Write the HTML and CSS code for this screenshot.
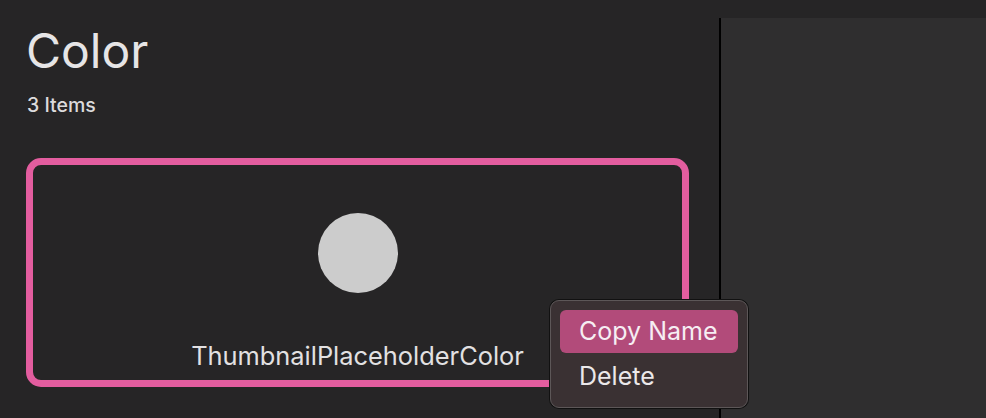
FILE: index.html
```html
<!DOCTYPE html>
<html>
<head>
<meta charset="utf-8">
<link rel="stylesheet" href="styles.css">
</head>
<body>
<div class="app">
  <main class="left">
    <h1 class="title">Color</h1>
    <div class="count">3 Items</div>
    <div class="card">
      <div class="swatch"></div>
      <div class="name">ThumbnailPlaceholderColor</div>
    </div>
  </main>
  <aside class="right"></aside>
</div>
<div class="menu">
  <div class="item active">Copy Name</div>
  <div class="item">Delete</div>
</div>
</body>
</html>
```
FILE: styles.css
```css
html, body {
  margin: 0;
  padding: 0;
  background: #262526;
  width: 986px;
  height: 418px;
  overflow: hidden;
  font-family: "Inter", "Liberation Sans", sans-serif;
}
.app {
  display: flex;
  height: 418px;
}
.left {
  width: 719px;
  flex: none;
  padding-left: 26px;
  box-sizing: border-box;
}
.title {
  margin: 0;
  padding-top: 23px;
  font-size: 48px;
  font-weight: 400;
  line-height: 56px;
  color: #e6e5e6;
  padding-left: 0;
}
.count {
  margin-top: 15px;
  font-size: 19.5px;
  font-weight: 500;
  line-height: 22px;
  color: #dcdbdc;
  padding-left: 1px;
}
.card {
  margin-top: 42px;
  width: 663px;
  height: 229px;
  box-sizing: border-box;
  border: 7px solid #e35d9f;
  border-radius: 15px;
  display: flex;
  flex-direction: column;
  align-items: center;
}
.swatch {
  margin-top: 48px;
  width: 80px;
  height: 80px;
  border-radius: 50%;
  background: #cccccc;
}
.name {
  margin-top: 48px;
  font-size: 25.4px;
  line-height: 30px;
  color: #e2e1e2;
}
.right {
  flex: 1;
  margin-top: 18px;
  border-left: 2px solid #000;
  background: #2f2e2f;
}
.menu {
  position: absolute;
  left: 550px;
  top: 300px;
  width: 198px;
  height: 108px;
  box-sizing: border-box;
  padding: 9px 9px 8px;
  background: #3a3133;
  border: 1px solid #5d5758;
  border-radius: 9px;
  box-shadow: 0 0 0 1px #111;
}
.item {
  height: 43px;
  line-height: 43px;
  padding-left: 19px;
  border-radius: 6px;
  font-size: 25px;
  color: #ebe8ea;
}
.item.active {
  background: #b24b7a;
  color: #f6eef3;
}
.item + .item {
  height: 46px;
  line-height: 46px;
}
```
